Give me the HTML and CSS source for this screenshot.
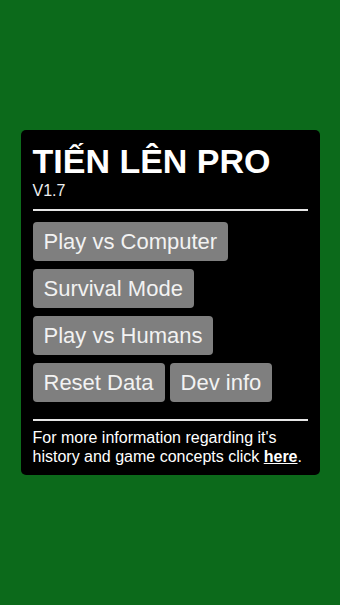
FILE: index.html
```html
<!DOCTYPE html>
<html lang="en">

<head>
    <meta charset="UTF-8">
    <meta name="viewport" content="width=device-width, initial-scale=1.0">
    <title>Tiến Lên Pro</title>
    <link rel="stylesheet" href="styles.css">
</head>

<body>
    <div class="menu">
        <h1 class="title">TIẾN LÊN PRO</h1>
        <div class="version">V1.7</div>
        <hr class="rule">
        <div class="buttons">
            <div class="row"><button class="btn">Play vs Computer</button></div>
            <div class="row"><button class="btn">Survival Mode</button></div>
            <div class="row"><button class="btn">Play vs Humans</button></div>
            <div class="row">
                <button class="btn">Reset Data</button>
                <button class="btn">Dev info</button>
            </div>
        </div>
        <hr class="rule">
        <p class="info">For more information regarding it's history and game concepts click <a href="#">here</a>.</p>
    </div>
</body>

</html>
```

FILE: styles.css
```css
*,
*:before,
*:after {
    box-sizing: border-box;
    margin: 0;
    padding: 0;
}

html,
body {
    width: 100%;
    height: 100%;
    overflow: hidden;
}

body {
    display: flex;
    align-items: center;
    justify-content: center;
    background: #0c6a1b;
    font-family: "Liberation Sans", Arial, sans-serif;
    color: #fff;
}

.menu {
    width: 299px;
    padding: 12px 12px 9px;
    background: #000;
    border-radius: 5px;
}

.title {
    font-size: 34px;
    line-height: 39px;
    font-weight: bold;
    letter-spacing: 0;
}

.version {
    margin-top: 1px;
    font-size: 16px;
    line-height: 18px;
    color: #eee;
}

.rule {
    border: none;
    height: 2px;
    background: #e6e6e6;
}

.version + .rule {
    margin-top: 9px;
}

.buttons {
    display: flex;
    flex-direction: column;
    gap: 8px;
    margin: 11px 0 17px;
}

.row {
    display: flex;
    gap: 5px;
}

.btn {
    height: 39px;
    padding: 0 11px;
    border: none;
    border-radius: 4px;
    background: #7f7f7f;
    color: #f2f2f2;
    font-family: inherit;
    font-size: 22px;
    cursor: pointer;
}

.info {
    margin-top: 7px;
    font-size: 16px;
    line-height: 19px;
    color: #fff;
}

.info a {
    color: #fff;
    font-weight: bold;
}
```
